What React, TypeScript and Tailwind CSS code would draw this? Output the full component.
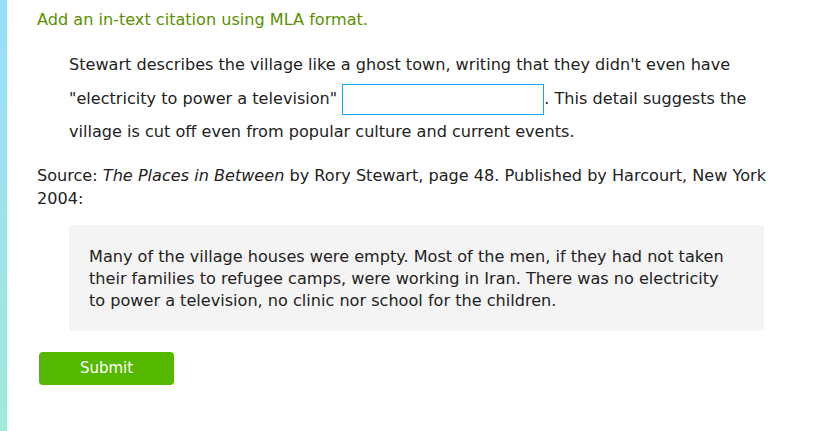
export default function App() {
  return (
    <div className="flex min-h-[431px] w-[830px] bg-white" style={{ fontFamily: '"DejaVu Sans", Verdana, sans-serif' }}>
      <div className="w-[7px] shrink-0 bg-gradient-to-b from-[#99defb] to-[#a1e9d9]" />
      <div className="flex w-[780px] flex-col pl-[30px] pt-[10px] text-[16.1px] text-[#222]">
        <h1 className="leading-[20px] text-[#5b8f00]">Add an in-text citation using MLA format.</h1>
        <p className="mt-[18px] pl-[32px] leading-[33.5px]">
          Stewart describes the village like a ghost town, writing that they didn't even have "electricity to power a
          television"{' '}
          <input
            type="text"
            className="inline-block h-[31px] w-[202px] border border-[#16a6ee] bg-white align-middle outline-none"
          />
          . This detail suggests the village is cut off even from popular culture and current events.
        </p>
        <p className="mt-[15px] leading-[23px]">
          Source: <i>The Places in Between</i> by Rory Stewart, page 48. Published by Harcourt, New York 2004:
        </p>
        <div className="ml-[32px] mt-[15.5px] w-[695px] rounded-[3px] bg-[#f4f4f4] pb-[19px] pl-[20px] pr-[26px] pt-[21px] leading-[22px]">
          Many of the village houses were empty. Most of the men, if they had not taken their families to refugee
          camps, were working in Iran. There was no electricity to power a television, no clinic nor school for the
          children.
        </div>
        <div className="mt-[21px] pl-[2px]">
          <button className="h-[33px] w-[135px] rounded-[4px] bg-[#55b800] text-[15px] text-white">Submit</button>
        </div>
      </div>
    </div>
  );
}
